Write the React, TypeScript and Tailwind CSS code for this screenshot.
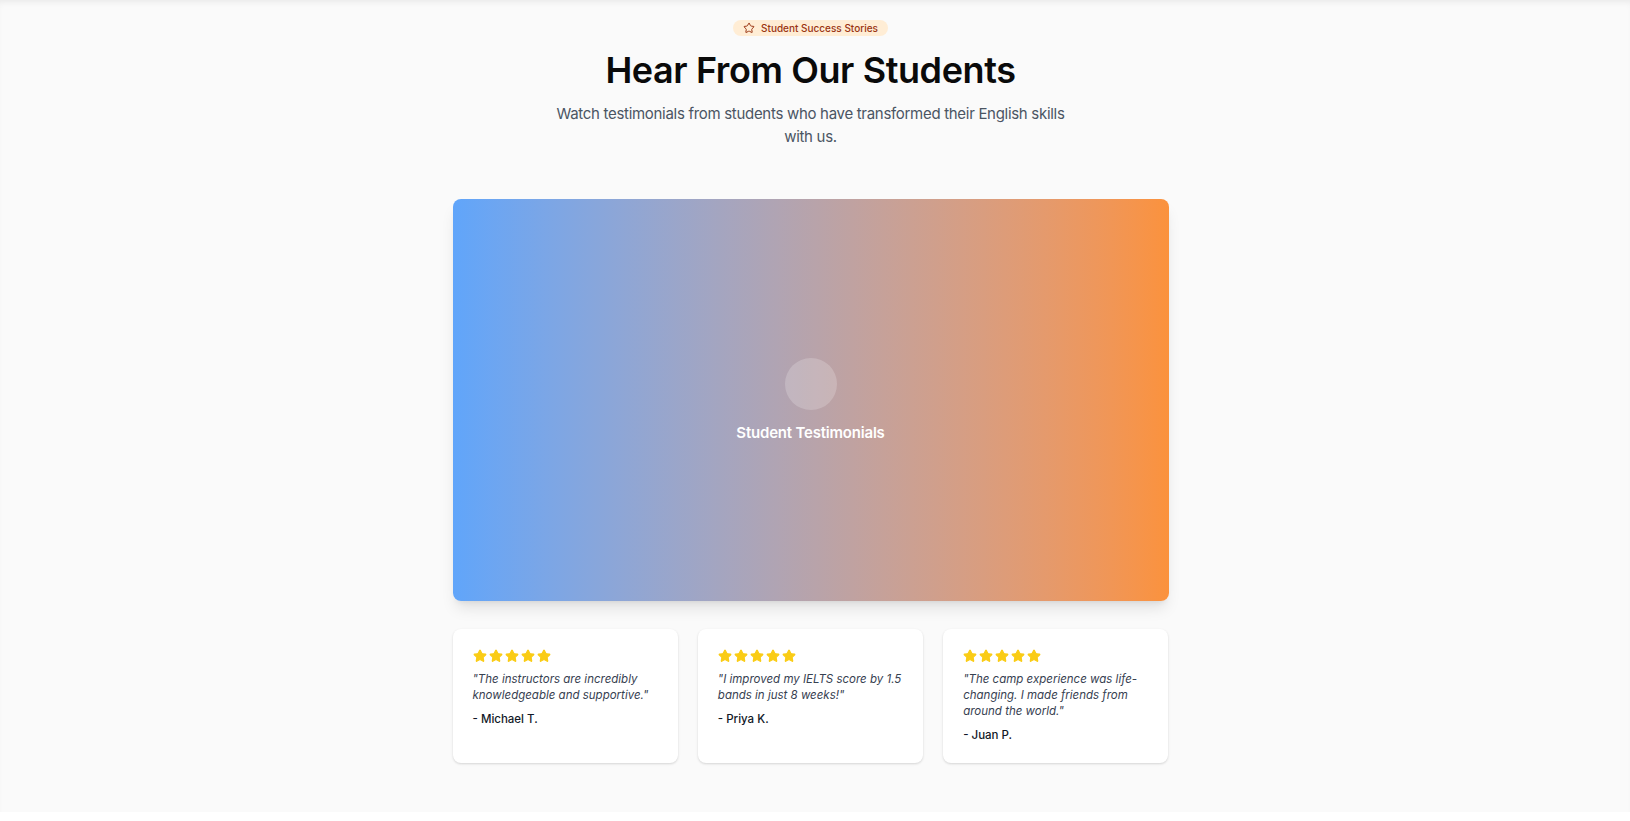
import { Star } from "lucide-react";

const reviews = [
  { quote: "\"The instructors are incredibly knowledgeable and supportive.\"", name: "- Michael T." },
  { quote: "\"I improved my IELTS score by 1.5 bands in just 8 weeks!\"", name: "- Priya K." },
  { quote: "\"The camp experience was life-changing. I made friends from around the world.\"", name: "- Juan P." },
];

const ReviewCard = ({ quote, name }: { quote: string; name: string }) => {
  return (
    <div className="bg-white rounded-lg shadow-[0_1px_3px_rgba(0,0,0,0.1),0_1px_2px_rgba(0,0,0,0.06)] p-5">
      <div className="flex gap-0.5 mb-2">
        {[0, 1, 2, 3, 4].map((i) => (
          <Star key={i} className="w-3.5 h-3.5 text-[#facc15] fill-[#facc15]" />
        ))}
      </div>
      <p className="text-[11.5px] leading-4 italic text-[#374151] mb-2">{quote}</p>
      <p className="text-[11.5px] leading-4 font-medium text-[#111827]">{name}</p>
    </div>
  );
};

const App = () => {
  return (
    <div className="bg-white min-h-screen font-['Inter',sans-serif]">
      {/* Testimonials */}
      <section className="bg-[#fafafa] h-[812px] pt-5 pr-[9px] shadow-[inset_0_5px_6px_-3px_rgba(0,0,0,0.07)]">
        <div className="flex flex-col items-center text-center">
          <span className="inline-flex items-center gap-1.5 bg-[#ffedd5] text-[#9a3412] rounded-full px-2.5 h-4 text-[10px] font-medium">
            <Star className="w-3 h-3" strokeWidth={2} />
            Student Success Stories
          </span>
          <h2 className="mt-3.5 text-4xl leading-10 font-semibold tracking-[-0.4px] text-[#0a0a0a]">
            Hear From Our Students
          </h2>
          <p className="mt-3 max-w-[520px] text-[15px] leading-[23px] tracking-[-0.3px] text-[#4b5563]">
            Watch testimonials from students who have transformed their English skills with us.
          </p>
        </div>

        <div className="w-[716px] mx-auto mt-[51px]">
          <div className="h-[402px] rounded-lg shadow-lg bg-gradient-to-r from-[#60a5fa] to-[#fb923c] flex flex-col items-center justify-center">
            <div className="w-13 h-13 rounded-full bg-white/20" />
            <p className="mt-[13px] text-[15px] leading-5 tracking-[-0.2px] font-semibold text-white">
              Student Testimonials
            </p>
          </div>

          <div className="grid grid-cols-3 gap-5 mt-7">
            {reviews.map((r) => (
              <ReviewCard key={r.name} quote={r.quote} name={r.name} />
            ))}
          </div>
        </div>
      </section>
    </div>
  );
};

export default App;
